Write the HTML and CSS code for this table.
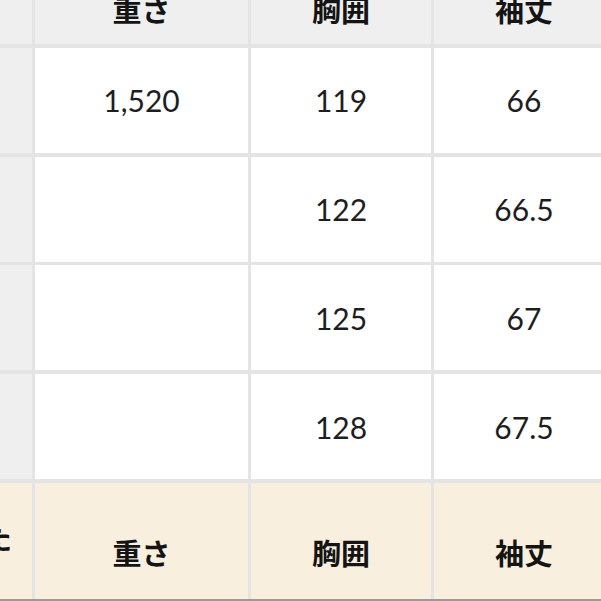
FILE: index.html
```html
<!DOCTYPE html>
<html lang="ja">
<head>
<meta charset="utf-8">
<link rel="stylesheet" href="styles.css">
</head>
<body>
<div class="size-table">
  <div class="cell head side"></div>
  <div class="cell head">重さ</div>
  <div class="cell head">胸囲</div>
  <div class="cell head">袖丈</div>

  <div class="cell side"></div>
  <div class="cell num">1,520</div>
  <div class="cell num">119</div>
  <div class="cell num">66</div>

  <div class="cell side"></div>
  <div class="cell num"></div>
  <div class="cell num">122</div>
  <div class="cell num">66.5</div>

  <div class="cell side"></div>
  <div class="cell num"></div>
  <div class="cell num">125</div>
  <div class="cell num">67</div>

  <div class="cell side"></div>
  <div class="cell num"></div>
  <div class="cell num">128</div>
  <div class="cell num">67.5</div>

  <div class="cell foot foot-side">た</div>
  <div class="cell foot">重さ</div>
  <div class="cell foot">胸囲</div>
  <div class="cell foot">袖丈</div>
</div>
</body>
</html>
```

FILE: styles.css
```css
html, body {
  margin: 0;
  padding: 0;
  width: 601px;
  height: 601px;
  overflow: hidden;
  background: #ffffff;
}

.size-table {
  display: grid;
  grid-template-columns: 120px 213px 180px 180px;
  grid-template-rows: 90px repeat(4, 105px) 116px;
  column-gap: 3px;
  row-gap: 3.75px;
  margin-left: -88px;
  margin-top: -46px;
  background: #e4e4e4;
  border-bottom: 2px solid #9c9a9a;
  width: max-content;
  font-family: "Lato", "Noto Sans CJK JP", sans-serif;
  color: #1e1e1e;
}

.cell {
  display: flex;
  justify-content: center;
  align-items: center;
  background: #ffffff;
}

.num {
  font-size: 30px;
  font-weight: 400;
}

.side {
  background: #efefef;
}

.head {
  background: #efefef;
  align-items: flex-end;
  padding-bottom: 17px;
  box-sizing: border-box;
  font-family: "Noto Sans CJK JP", sans-serif;
  font-weight: 700;
  font-size: 29px;
  line-height: 35px;
  color: #141414;
}

.foot {
  background: #f8efdf;
  align-items: flex-start;
  padding-top: 52px;
  box-sizing: border-box;
  font-family: "Noto Sans CJK JP", sans-serif;
  font-weight: 700;
  font-size: 29px;
  line-height: 35px;
  color: #141414;
}

.foot-side {
  justify-content: flex-end;
  padding-top: 37px;
  padding-right: 20px;
}
```
